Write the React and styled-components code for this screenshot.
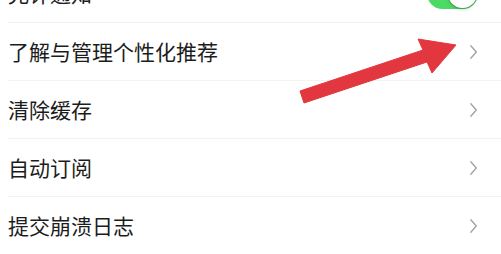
import React from 'react';
import styled, { createGlobalStyle } from 'styled-components';

const GlobalStyle = createGlobalStyle`
  html, body {
    margin: 0;
    padding: 0;
    background: #ffffff;
    overflow: hidden;
  }
  body {
    font-family: "Noto Sans CJK SC", "Noto Sans", sans-serif;
  }
`;

const Page = styled.div`
  position: relative;
  width: 501px;
  height: 254px;
  overflow: hidden;
  background: #fff;
`;

const List = styled.div`
  display: flex;
  flex-direction: column;
  margin-top: -35px;
`;

const Row = styled.div`
  display: flex;
  align-items: center;
  justify-content: space-between;
  height: 57px;
  margin-left: 8px;
  padding-right: 23px;
  border-bottom: 1px solid #f3f3f3;
`;

const Label = styled.span`
  font-size: 21px;
  line-height: 1;
  color: #1c1c1c;
`;

const Switch = styled.div`
  position: relative;
  width: 51px;
  height: 31px;
  border-radius: 16px;
  background: ${({ on }) => (on ? '#4cd964' : '#e5e5e5')};
`;

const Knob = styled.div`
  position: absolute;
  top: 1px;
  right: ${({ on }) => (on ? '1px' : 'auto')};
  left: ${({ on }) => (on ? 'auto' : '1px')};
  width: 29px;
  height: 29px;
  border-radius: 50%;
  background: #fff;
  box-shadow: 0 0 0 1px rgba(0, 0, 0, 0.12), 0 2px 3px rgba(0, 0, 0, 0.15);
`;

const Chevron = () => (
  <svg width="9" height="16" viewBox="0 0 9 16" fill="none">
    <path d="M1.8 1.8 L7.3 8 L1.8 14.2" stroke="#a0a0a0" strokeWidth="1.3" strokeLinecap="round" strokeLinejoin="round" />
  </svg>
);

const Overlay = styled.svg`
  position: absolute;
  left: 0;
  top: 0;
  pointer-events: none;
`;

const rows = [
  { label: '允许通知', toggle: true },
  { label: '了解与管理个性化推荐' },
  { label: '清除缓存' },
  { label: '自动订阅' },
  { label: '提交崩溃日志' },
];

const App = () => (
  <Page>
    <GlobalStyle />
    <List>
      {rows.map((r) => (
        <Row key={r.label}>
          <Label>{r.label}</Label>
          {r.toggle ? (
            <Switch on>
              <Knob on />
            </Switch>
          ) : (
            <Chevron />
          )}
        </Row>
      ))}
    </List>
    <Overlay width="501" height="254" viewBox="0 0 501 254">
      <polygon
        points="300,91 423,50 418,39 456,45 432,73 427,62 304,103"
        fill="#e3373f"
        stroke="#e3373f"
        strokeWidth="1"
        strokeLinejoin="round"
      />
    </Overlay>
  </Page>
);

export default App;
